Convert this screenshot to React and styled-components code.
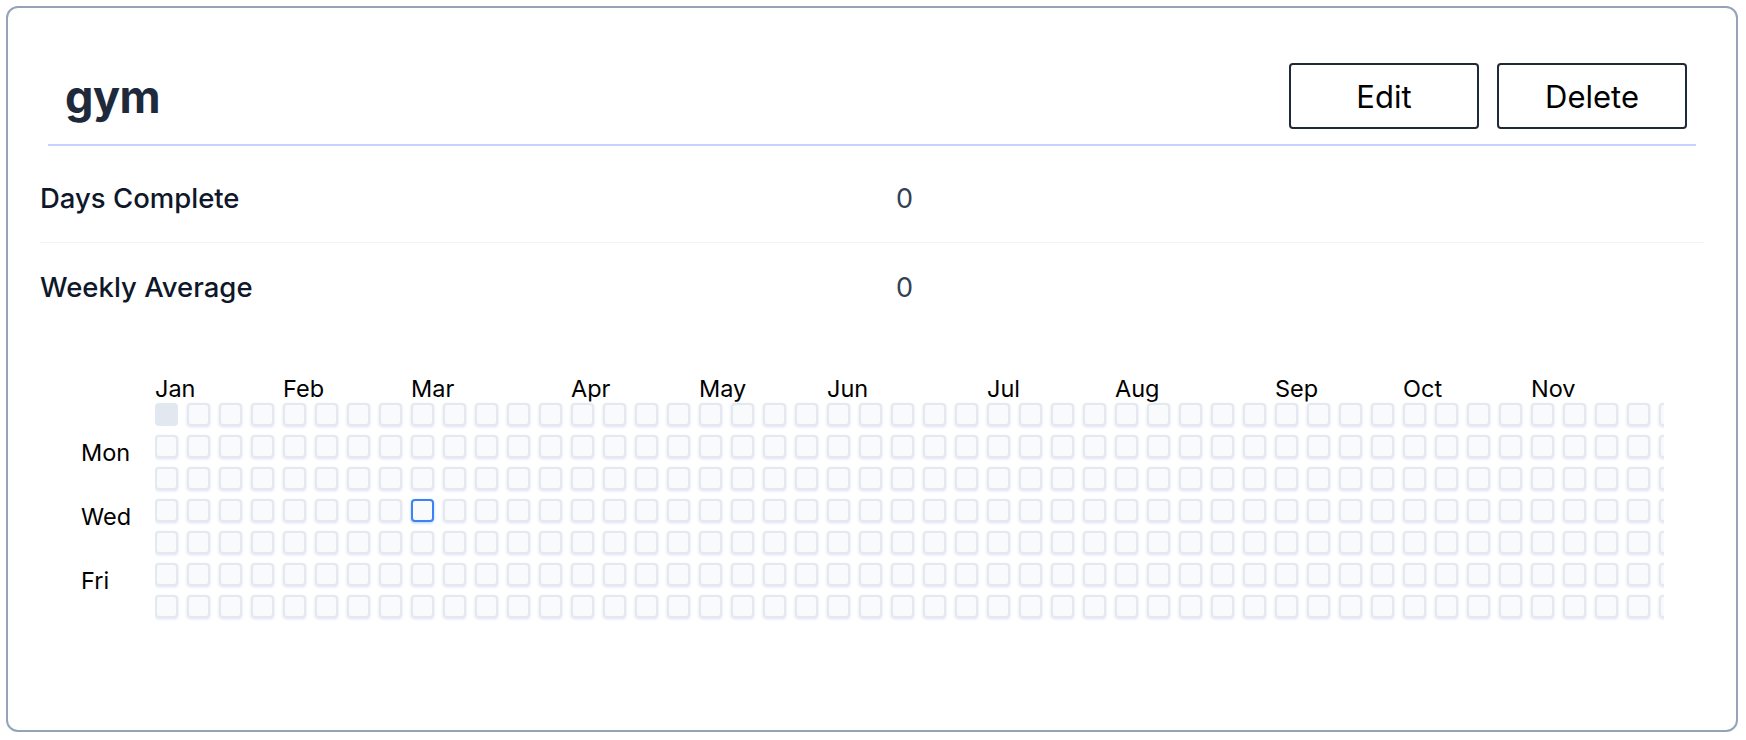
import React from 'react';
import styled, { createGlobalStyle } from 'styled-components';

const GlobalStyle = createGlobalStyle`
  body {
    margin: 0;
    background: #fff;
    font-family: Inter, "Noto Sans", sans-serif;
  }
`;

const Page = styled.div`
  padding: 6px 8px 8px 6px;
`;

const Card = styled.div`
  height: 726px;
  box-sizing: border-box;
  border: 2px solid #94a3b8;
  border-radius: 12px;
  background: #fff;
`;

const Header = styled.div`
  display: flex;
  align-items: center;
  justify-content: space-between;
  margin: 0 40px;
  padding: 55px 9px 15px 17px;
  border-bottom: 2px solid #c7d2fe;
`;

const Title = styled.h1`
  margin: 0;
  font-size: 45px;
  font-weight: 700;
  color: #1e293b;
  letter-spacing: -0.5px;
`;

const Actions = styled.div`
  display: flex;
  gap: 18px;
`;

const Button = styled.button`
  width: 190px;
  height: 66px;
  border: 2px solid #1e293b;
  border-radius: 4px;
  background: #fff;
  font-family: inherit;
  font-size: 31px;
  color: #000;
  cursor: pointer;
`;

const Stats = styled.dl`
  margin: 8px 32px 0;
`;

const StatRow = styled.div`
  display: grid;
  grid-template-columns: 856px 1fr;
  align-items: center;
  height: 88px;
  border-bottom: 1px solid ${(p) => (p.last ? 'transparent' : '#f1f5f9')};
`;

const StatLabel = styled.dt`
  font-size: 27.5px;
  font-weight: 500;
  color: #0f172a;
`;

const StatValue = styled.dd`
  margin: 0;
  font-size: 27px;
  color: #334155;
`;

const Heatmap = styled.div`
  display: flex;
  padding: 38px 0 0 73px;
`;

const DayLabels = styled.div`
  display: grid;
  grid-template-rows: repeat(7, 23px);
  row-gap: 9px;
  width: 74px;
  margin-top: 33px;
`;

const DayLabel = styled.span`
  align-self: center;
  font-size: 23.5px;
  line-height: 28px;
  color: #000;
  transform: translateY(6px);
`;

const Calendar = styled.div`
  width: 1509px;
  overflow: hidden;
`;

const Months = styled.div`
  display: grid;
  box-sizing: border-box;
  grid-template-columns: repeat(53, 23px);
  column-gap: 9px;
  height: 33px;
  align-items: end;
`;

const Month = styled.span`
  font-size: 23.5px;
  line-height: 28px;
  color: #000;
  white-space: nowrap;
`;

const Weeks = styled.div`
  display: grid;
  grid-auto-flow: column;
  grid-template-rows: repeat(7, 23px);
  grid-auto-columns: 23px;
  gap: 9px;
  padding-bottom: 4px;
`;

const Day = styled.div`
  box-sizing: border-box;
  border-radius: 4px;
  background: ${(p) => (p.blank ? '#e2e8f0' : '#f8fafc')};
  border: ${(p) =>
    p.today ? '2px solid #3b82f6' : p.blank ? 'none' : '2px solid #e5e8ee'};
  box-shadow: ${(p) =>
    p.blank
      ? 'none'
      : p.today
      ? '0 1px 3px rgba(59,130,246,0.4)'
      : '0 1px 3px rgba(191,203,250,0.6)'};
`;

const months = [
  ['Jan', 0],
  ['Feb', 4],
  ['Mar', 8],
  ['Apr', 13],
  ['May', 17],
  ['Jun', 21],
  ['Jul', 26],
  ['Aug', 30],
  ['Sep', 35],
  ['Oct', 39],
  ['Nov', 43],
];

const days = Array.from({ length: 53 * 7 }, (_, i) => i);

const App = () => (
  <Page>
    <GlobalStyle />
    <Card>
      <Header>
        <Title>gym</Title>
        <Actions>
          <Button>Edit</Button>
          <Button>Delete</Button>
        </Actions>
      </Header>
      <Stats>
        <StatRow>
          <StatLabel>Days Complete</StatLabel>
          <StatValue>0</StatValue>
        </StatRow>
        <StatRow last>
          <StatLabel>Weekly Average</StatLabel>
          <StatValue>0</StatValue>
        </StatRow>
      </Stats>
      <Heatmap>
        <DayLabels>
          <span />
          <DayLabel>Mon</DayLabel>
          <span />
          <DayLabel>Wed</DayLabel>
          <span />
          <DayLabel>Fri</DayLabel>
          <span />
        </DayLabels>
        <Calendar>
          <Months>
            {months.map(([name, col]) => (
              <Month key={name} style={{ gridColumn: `${col + 1} / span 3` }}>
                {name}
              </Month>
            ))}
          </Months>
          <Weeks>
            {days.map((d) => (
              <Day key={d} blank={d === 0} today={d === 8 * 7 + 3} />
            ))}
          </Weeks>
        </Calendar>
      </Heatmap>
    </Card>
  </Page>
);

export default App;
